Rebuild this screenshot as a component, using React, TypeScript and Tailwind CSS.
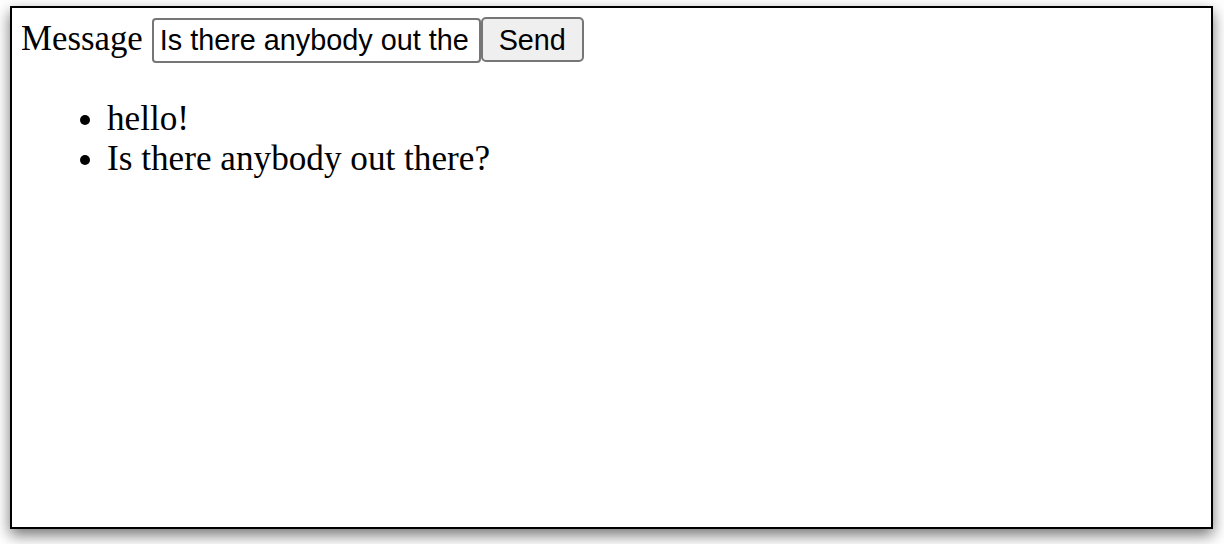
import React from "react";

export default function App() {
  return (
    <div className="w-[1224px] h-[544px] bg-white pt-[6px] pl-[10px]">
      <div className="w-[1203px] h-[523px] border-2 border-black bg-white shadow-[0_6px_14px_rgba(0,0,0,0.55)] pt-[9px] pl-[9px]">
        <form className="flex items-baseline">
          <label className="text-[34.8px] leading-[40px] text-black font-['Liberation_Serif',serif]">
            Message
          </label>
          <input
            className="ml-[9px] w-[329px] h-[45px] border-2 border-[#767676] rounded-[4px] pl-[6px] pr-[9px] text-[28.8px] text-black bg-white outline-none font-['Liberation_Sans',Arial,sans-serif]"
            defaultValue="Is there anybody out there?"
          />
          <button
            type="button"
            className="w-[103px] h-[45px] border-2 border-[#767676] rounded-[5px] bg-[#efefef] text-[28.8px] text-black font-['Liberation_Sans',Arial,sans-serif]"
          >
            Send
          </button>
        </form>
        <ul className="list-disc pl-[86px] mt-[36px] text-[35.2px] leading-[40px] text-black font-['Liberation_Serif',serif]">
          <li>hello!</li>
          <li>Is there anybody out there?</li>
        </ul>
      </div>
    </div>
  );
}
